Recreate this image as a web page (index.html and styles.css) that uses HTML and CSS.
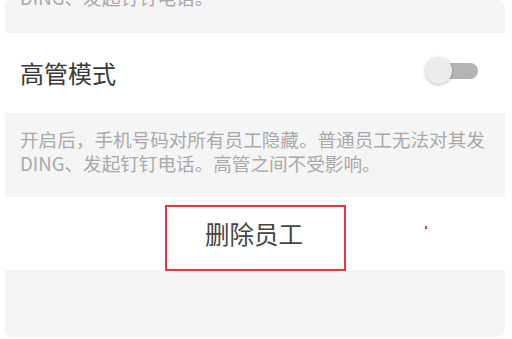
FILE: index.html
```html
<!DOCTYPE html>
<html lang="zh-CN">
<head>
<meta charset="utf-8">
<link rel="stylesheet" href="styles.css">
</head>
<body>
<div class="page">
  <div class="card">
    <div class="desc desc-top">
      <p class="desc-text cut">DING、发起钉钉电话。</p>
    </div>
    <div class="row">
      <span class="row-title">高管模式</span>
      <span class="toggle"><span class="track"></span><span class="knob"></span></span>
    </div>
    <div class="desc">
      <p class="desc-text">开启后，手机号码对所有员工隐藏。普通员工无法对其发DING、发起钉钉电话。高管之间不受影响。</p>
    </div>
    <div class="action">
      <span class="action-text">删除员工</span>
      <span class="mark-box"></span>
      <span class="mark-dot"></span>
    </div>
    <div class="footer"></div>
  </div>
</div>
</body>
</html>
```
FILE: styles.css
```css
html, body {
  margin: 0;
  padding: 0;
  background: #ffffff;
  overflow: hidden;
}
.page {
  width: 512px;
  height: 339px;
  padding: 0 7px 0 5px;
  box-sizing: border-box;
  font-family: "Noto Sans CJK SC", "Noto Sans", sans-serif;
}
.card {
  display: flex;
  flex-direction: column;
}
.desc {
  background: #f5f5f5;
  padding: 14px 14px 22px 15px;
}
.desc-top {
  height: 33px;
  box-sizing: border-box;
  padding-top: 0;
  padding-bottom: 0;
  border-radius: 6px 8px 0 0;
  overflow: hidden;
}
.desc-text {
  margin: 0;
  font-size: 18.6px;
  line-height: 24px;
  color: #a9a9a9;
}
.desc-text.cut {
  margin-top: -15px;
}
.row {
  height: 80px;
  display: flex;
  align-items: center;
  justify-content: space-between;
  padding: 0 27px 0 15px;
  background: #ffffff;
}
.row-title {
  font-size: 24px;
  color: #383838;
  line-height: 30px;
}
.toggle {
  position: relative;
  width: 53px;
  height: 28px;
  margin-top: -4px;
}
.track {
  position: absolute;
  left: 15px;
  top: 6px;
  width: 38px;
  height: 16px;
  border-radius: 8px;
  background: #b4b4b4;
}
.knob {
  position: absolute;
  left: 0;
  top: 0;
  width: 27px;
  height: 27px;
  border-radius: 50%;
  background: #ececec;
  box-shadow: 0 1px 3px rgba(0,0,0,0.25);
}
.action {
  position: relative;
  height: 73px;
  display: flex;
  align-items: center;
  justify-content: center;
  background: #ffffff;
}
.action-text {
  font-size: 24.5px;
  color: #444444;
  line-height: 30px;
  margin-left: -2px;
}
.mark-box {
  position: absolute;
  left: 160px;
  top: 8px;
  width: 181px;
  height: 66px;
  box-sizing: border-box;
  border: 2px solid #e23b3b;
}
.mark-dot {
  position: absolute;
  left: 420px;
  top: 29px;
  width: 2px;
  height: 3px;
  background: #e23b3b;
}
.footer {
  height: 67px;
  background: #f5f5f5;
  border-radius: 0 0 8px 8px;
}
```
